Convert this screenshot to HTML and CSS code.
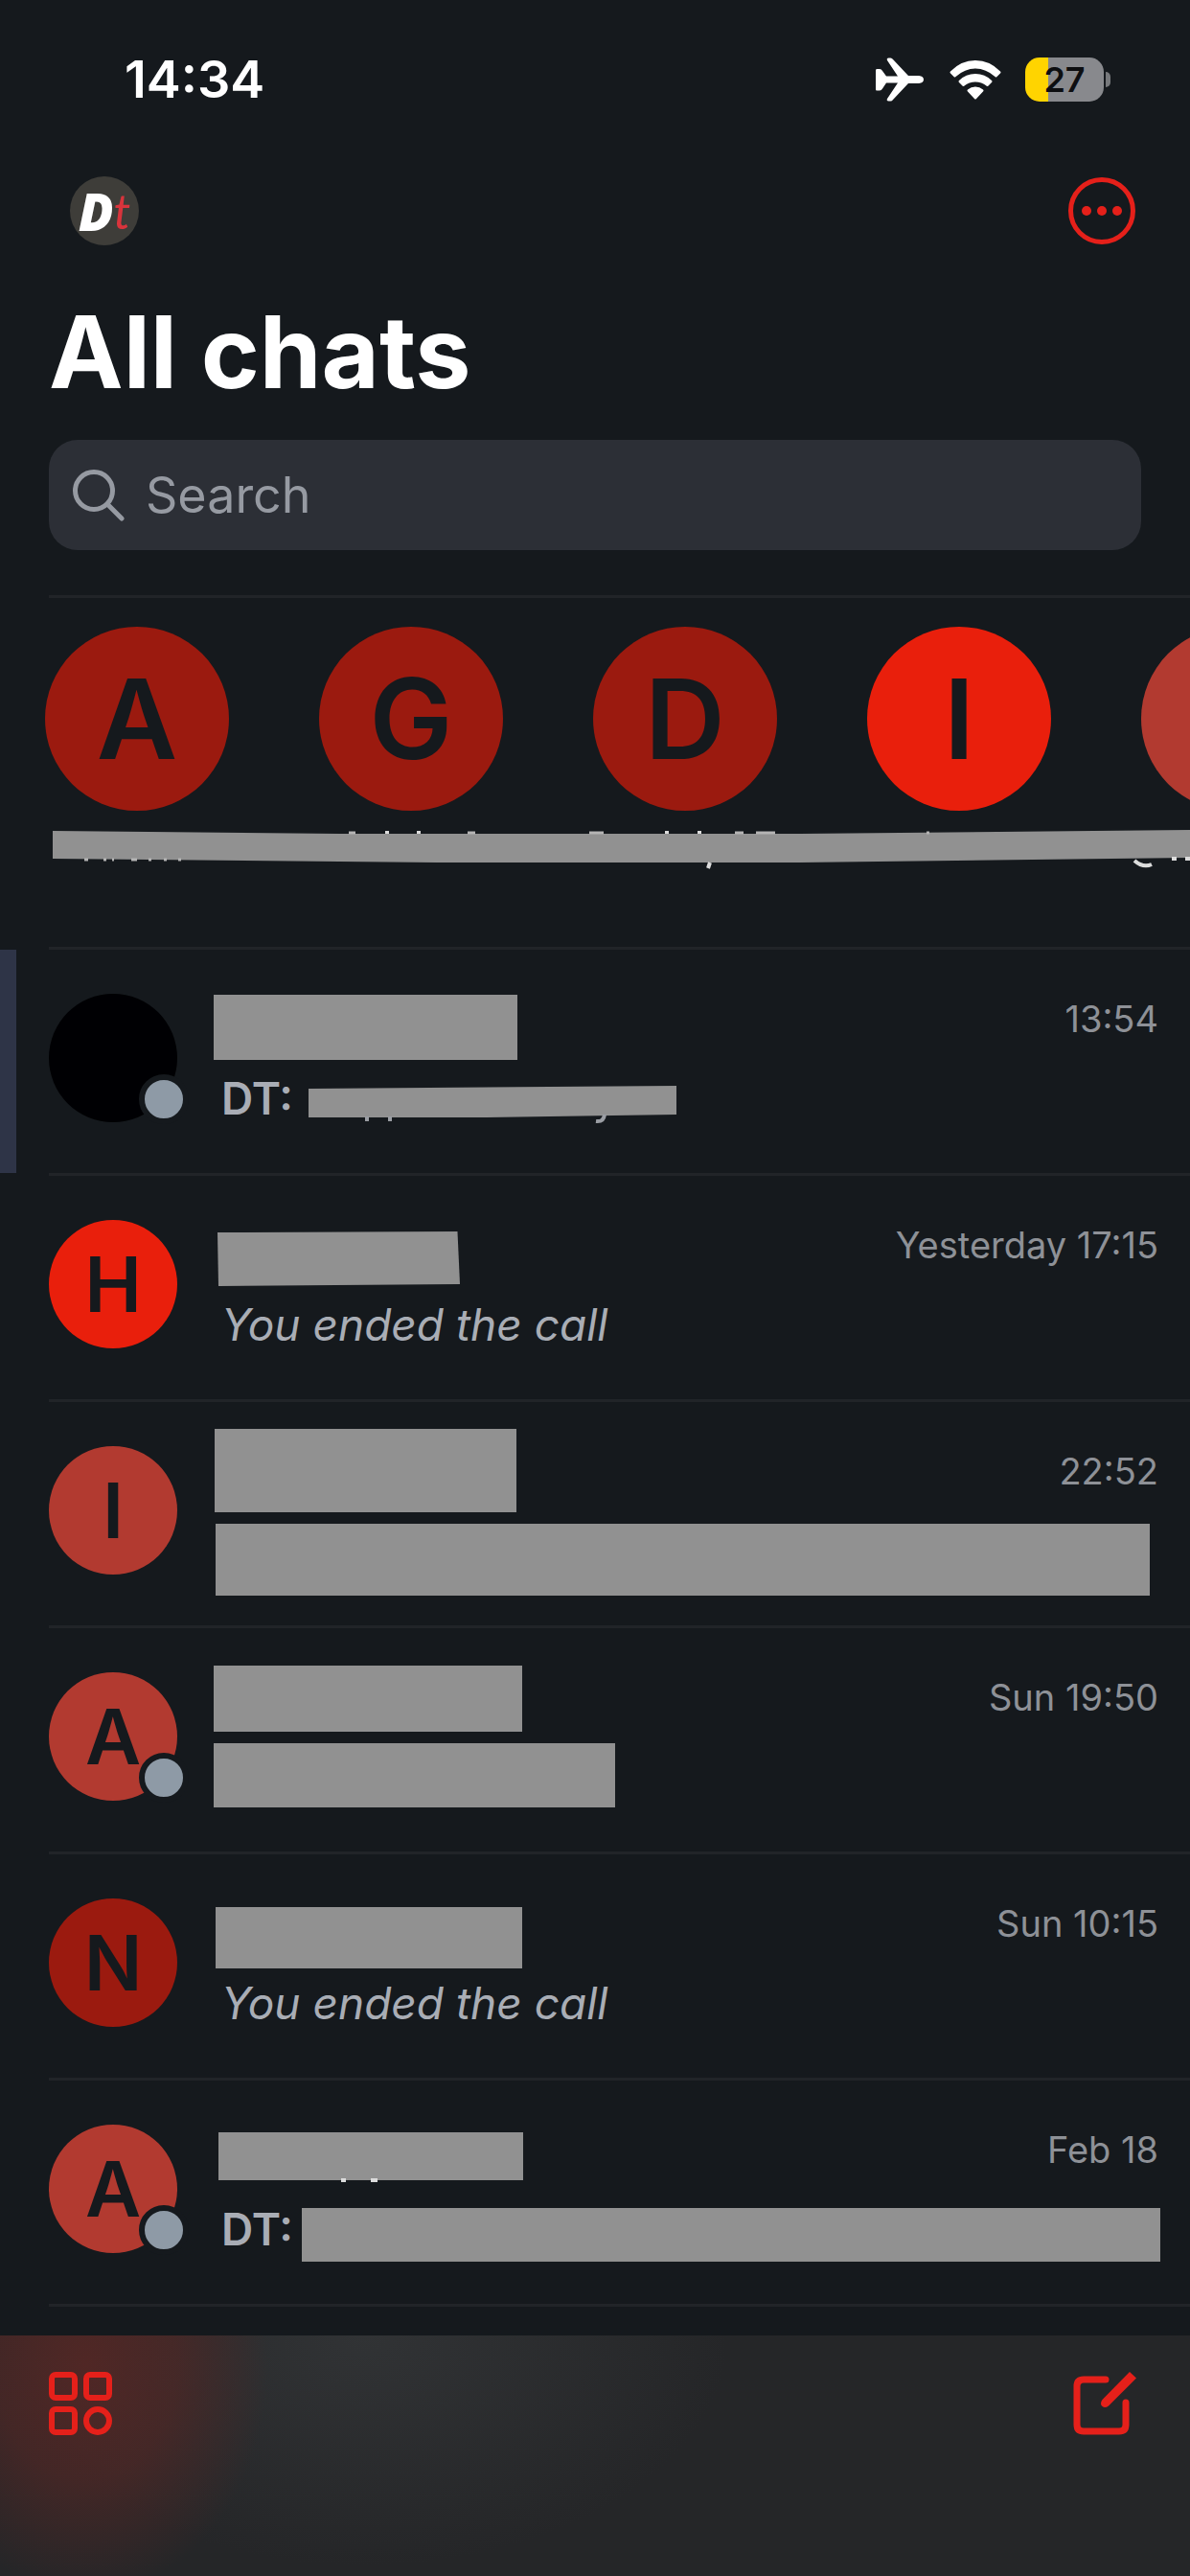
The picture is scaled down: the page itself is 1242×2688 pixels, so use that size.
FILE: index.html
```html
<!DOCTYPE html>
<html lang="en">
<head>
<meta charset="utf-8">
<meta name="viewport" content="width=device-width, initial-scale=1">
<title>All chats</title>
<link rel="stylesheet" href="styles.css">
</head>
<body>
<div class="app">
  <div class="status">
    <time class="status-time">14:34</time>
    <div class="status-icons">
      <svg class="plane" viewBox="0 0 50 46" aria-hidden="true"><path d="M1 12h3q2 0 3 2l4 5.500h12L12 3q-1-2.500 1.500-2.500h2q1.500 0 2.500 1.500l16 17h11q5 .5 5 4t-5 4h-11L18 44q-1 1.500-2.500 1.500h-2Q11 45.500 12 43l11-16.500H11l-4 6q-1 2-3 2H1q-1 0-1-1.500V13.500Q0 12 1 12z"/></svg>
      <svg class="wifi" viewBox="0 0 54 43" aria-hidden="true"><path d="M1 12.500Q12 1 27 1t26 11.500q1 1 0 2l-3.500 3.500q-1 1-2 0Q38 9.500 27 9.500T6.500 18q-1 1-2 0L1 14.500q-1-1 0-2z"/><path d="M10 22q7-7 17-7t17 7q1 1 0 2l-3.500 3.500q-1 1-2 0-5-4-11.500-4t-11.500 4q-1 1-2 0L10 24q-1-1 0-2z"/><path d="M19 31.500q3.500-3 8-3t8 3q1 1 0 2l-7 7.500q-1 1-2 0l-7-7.500q-1-1 0-2z"/></svg>
      <div class="battery"><span class="battery-level">27</span></div>
    </div>
  </div>

  <header class="top">
    <div class="toolbar">
      <button class="profile" aria-label="Profile"><span class="profile-d">D</span><span class="profile-t">t</span></button>
      <button class="icon-button" aria-label="More options">
        <svg class="more" viewBox="0 0 72 72" aria-hidden="true"><circle cx="36" cy="36" r="32.500" fill="none" stroke="currentColor" stroke-width="5"/><circle cx="20" cy="36" r="5"/><circle cx="36" cy="36" r="5"/><circle cx="52" cy="36" r="5"/></svg>
      </button>
    </div>
    <h1 class="title">All chats</h1>
    <label class="search">
      <svg class="search-icon" viewBox="0 0 54 54" aria-hidden="true"><circle cx="22" cy="22" r="19.500"/><path d="M36 36l15 15"/></svg>
      <input class="search-input" type="search" placeholder="Search" aria-label="Search">
    </label>
  </header>

  <section class="recents" aria-label="Recent chats">
    <div class="recent-list">
      <div class="recent dark">A</div>
      <div class="recent dark">G</div>
      <div class="recent dark">D</div>
      <div class="recent bright">I</div>
      <div class="recent soft"></div>
    </div>
    <svg class="recent-mask" viewBox="0 0 1187 44" aria-hidden="true">
      <path class="mask" d="M0 3L300 6H780L1187 2V31L780 36H400L0 32z"/>
      <path class="scrap faint" d="M33 33h4m16 0h3m6 0h2m18 0h6m12 0h3m13 0h3m12 0h3M309 5h7m117 0h8M560 5h15m137 0h9m13 0h20M912 5h3"/>
      <path class="scrap" d="M349 3v3m33-3v3m259-3v3m34-3v3M686 36l-2 6M1129 34q9 8 18 4M1168 32h5m9 0h5"/>
    </svg>
  </section>

  <ul class="chats">
    <li class="chat selected">
      <div class="avatar black"><span class="presence"></span></div>
      <div class="body">
        <div class="name"><span class="mask-box name-1"></span></div>
        <div class="preview"><b class="sender">DT:</b>
          <svg class="preview-1" viewBox="0 0 384 42" aria-hidden="true"><path class="mask" d="M0 4L384 1V31L180 34H0z"/><path class="scrap dim" d="M61 33v5m24-5v5m224-7q-1 8-9 7"/></svg>
        </div>
      </div>
      <time class="when">13:54</time>
    </li>
    <li class="chat">
      <div class="avatar bright">H</div>
      <div class="body">
        <div class="name"><span class="mask-box name-2"></span></div>
        <div class="preview"><i>You ended the call</i></div>
      </div>
      <time class="when">Yesterday 17:15</time>
    </li>
    <li class="chat">
      <div class="avatar soft">I</div>
      <div class="body">
        <div class="name"><span class="mask-box name-3"></span></div>
        <div class="preview"><span class="mask-box preview-3"></span></div>
      </div>
      <time class="when">22:52</time>
    </li>
    <li class="chat">
      <div class="avatar soft">A<span class="presence"></span></div>
      <div class="body">
        <div class="name"><span class="mask-box name-4"></span></div>
        <div class="preview"><span class="mask-box preview-4"></span></div>
      </div>
      <time class="when">Sun 19:50</time>
    </li>
    <li class="chat">
      <div class="avatar dark">N</div>
      <div class="body">
        <div class="name"><span class="mask-box name-5"></span></div>
        <div class="preview"><i>You ended the call</i></div>
      </div>
      <time class="when">Sun 10:15</time>
    </li>
    <li class="chat">
      <div class="avatar soft">A<span class="presence"></span></div>
      <div class="body">
        <div class="name">
          <svg class="name-6" viewBox="0 0 318 54" aria-hidden="true"><path class="mask" d="M0 0H318V50H0z"/><path class="scrap" d="M128 50h5m26 0h7"/></svg>
        </div>
        <div class="preview"><b class="sender">DT:</b><span class="mask-box preview-6"></span></div>
      </div>
      <time class="when">Feb 18</time>
    </li>
  </ul>

  <nav class="tabs" aria-label="Actions">
    <button class="icon-button" aria-label="Spaces">
      <svg class="tab-icon" viewBox="0 0 66 66" aria-hidden="true"><g fill="none" stroke="currentColor" stroke-width="6"><rect x="3" y="3" width="24" height="24" rx="4"/><rect x="39" y="3" width="24" height="24" rx="4"/><rect x="3" y="39" width="24" height="24" rx="4"/><circle cx="51" cy="51" r="12"/></g></svg>
    </button>
    <button class="icon-button" aria-label="New chat">
      <svg class="tab-icon" viewBox="0 0 66 66" aria-hidden="true"><g fill="none" stroke="currentColor"><path d="M34 8H11Q4 8 4 15V55Q4 62 11 62H48Q55 62 55 55V32" stroke-width="7" stroke-linecap="round"/></g><path d="M59 0l7 6.500-29 29q-2 1.500-4 1.500-4-1-4-4 0-2 1.500-4z"/></svg>
    </button>
  </nav>
</div>
</body>
</html>
```
FILE: styles.css
```css
:root {
  --bg: #15191d;
  --accent: #e5201a;
  --mask: #919191;
  --line: #212428;
  --muted: #8e9197;
  --text: #a9adb5;
}

* { box-sizing: border-box; }

body {
  margin: 0;
  background: var(--bg);
  color: #fff;
  font-family: Inter, "Liberation Sans", sans-serif;
}

button {
  padding: 0;
  border: 0;
  background: none;
  font: inherit;
}

svg { display: block; fill: currentColor; }

.app {
  display: flex;
  flex-direction: column;
  min-height: 100vh;
  overflow: hidden;
}

/* Status bar */
.status {
  display: flex;
  align-items: center;
  justify-content: space-between;
  height: 113px;
  padding: 53px 83px 0 130px;
}
.status-time { font-size: 54px; font-weight: 600; line-height: 60px; }
.status-icons { display: flex; align-items: center; }
.plane { width: 50px; height: 46px; }
.wifi { width: 54px; height: 43px; margin: 0 25px 0 27px; }
.battery { display: flex; align-items: center; gap: 2px; }
.battery::after {
  content: "";
  width: 5px;
  height: 16px;
  border-radius: 0 8px 8px 0;
  background: #77797c;
}
.battery-level {
  width: 82px;
  border-radius: 15px;
  background: linear-gradient(90deg, #ffd400 24px, #88898d 24px);
  color: #0d0e10;
  font-size: 36px;
  font-weight: 600;
  line-height: 46px;
  text-align: center;
}

/* Header */
.top { padding: 71px 51px 47px; }
.toolbar {
  display: flex;
  justify-content: space-between;
  padding: 0 5px 0 22px;
}
.profile {
  display: flex;
  align-items: center;
  justify-content: center;
  width: 72px;
  height: 72px;
  border-radius: 50%;
  background: #3e3d39;
  line-height: 72px;
}
.profile-d {
  color: #fff;
  font-family: "Open Sans", sans-serif;
  font-size: 54px;
  font-style: italic;
  font-weight: 800;
}
.profile-t {
  color: #d8343c;
  font-family: Lato, sans-serif;
  font-size: 50px;
  font-style: italic;
  font-weight: 400;
}
.icon-button { color: var(--accent); }
.more { width: 72px; height: 72px; }
.title {
  margin: 51px 0 32px;
  font-size: 104px;
  font-weight: 700;
  line-height: 120px;
}
.search {
  display: flex;
  align-items: center;
  gap: 22px;
  height: 115px;
  padding: 0 25px;
  border-radius: 30px;
  background: #2c2f36;
  color: #969aa2;
}
.search-icon {
  width: 54px;
  height: 54px;
  fill: none;
  stroke: currentColor;
  stroke-width: 5;
  stroke-linecap: round;
}
.search-input {
  flex: 1;
  min-width: 0;
  padding: 0;
  border: 0;
  outline: 0;
  background: none;
  color: inherit;
  font: inherit;
  font-size: 52px;
}
.search-input::placeholder { color: inherit; opacity: 1; }

/* Avatar colours */
.dark { background: #9b1a0f; }
.bright { background: #e91f0c; }
.soft { background: #b23a30; }
.black { background: #000003; }

/* Redactions */
.mask { fill: var(--mask); }
.mask-box { display: block; background: var(--mask); }
.scrap { fill: none; stroke: #dcdcdc; stroke-width: 4; }
.scrap.faint { stroke: #b4b4b4; stroke-width: 3; }
.scrap.dim { stroke: #9a9da3; }

/* Recent chats */
.recents {
  height: 367px;
  margin-left: 51px;
  border-top: 3px solid var(--line);
}
.recent-list {
  display: flex;
  gap: 94px;
  margin: 30px 0 18px -4px;
  overflow: hidden;
}
.recent {
  flex: none;
  width: 192px;
  height: 192px;
  border-radius: 50%;
  color: #15191d;
  font-size: 116px;
  font-weight: 600;
  line-height: 192px;
  text-align: center;
}
.recent-mask { width: calc(100% - 4px); margin-left: 4px; }

/* Chat list */
.chats {
  margin: 0 0 30px;
  padding: 0 0 0 51px;
  list-style: none;
}
.chats::after {
  content: "";
  display: block;
  height: 3px;
  background: var(--line);
}
.chat {
  position: relative;
  display: flex;
  height: 236px;
  padding-right: 34px;
  border-top: 3px solid var(--line);
}
.selected::before {
  content: "";
  position: absolute;
  left: -51px;
  width: 17px;
  height: 233px;
  background: #2e3447;
}
.avatar {
  position: relative;
  flex: none;
  width: 134px;
  height: 134px;
  margin: 46px 38px 0 0;
  border-radius: 50%;
  color: #15191d;
  font-size: 80px;
  font-weight: 600;
  line-height: 134px;
  text-align: center;
}
.presence {
  position: absolute;
  right: -12px;
  bottom: -2px;
  width: 52px;
  height: 52px;
  border: 6px solid var(--bg);
  border-radius: 50%;
  background: #8e9aa6;
}
.body { flex: 1; min-width: 0; }
.name { display: flex; align-items: flex-end; height: 115px; }
.preview {
  display: flex;
  align-items: flex-start;
  padding-left: 8px;
  color: var(--text);
  font-size: 46px;
  line-height: 80px;
  white-space: nowrap;
}
.sender { font-weight: 600; }
.when {
  position: absolute;
  top: 46px;
  right: 33px;
  color: var(--muted);
  font-size: 38px;
  line-height: 52px;
}

.name-1 { width: 317px; height: 68px; }
.name-2 { width: 253px; height: 57px; margin-left: 4px; clip-path: polygon(0 1px, 99% 0, 100% 55px, 1px 100%); }
.name-3 { width: 315px; height: 87px; margin-left: 1px; }
.name-4 { width: 322px; height: 69px; margin-bottom: 7px; }
.name-5 { width: 320px; height: 64px; margin: 0 0 -4px 2px; }
.name-6 { width: 318px; height: 54px; margin: 0 0 7px 5px; }
.preview-1 { width: 384px; height: 42px; margin: 26px 0 0 16px; }
.preview-3 { flex: 1; height: 75px; margin: 12px 8px 0 -6px; }
.preview-4 { width: 419px; height: 67px; margin: 5px 0 0 -8px; }
.preview-6 { flex: 1; height: 56px; margin: 18px -3px 0 9px; }

/* Bottom bar */
.tabs {
  display: flex;
  align-items: flex-start;
  justify-content: space-between;
  height: 251px;
  margin-top: auto;
  padding: 38px 56px 0 51px;
  background:
    radial-gradient(ellipse 190px 240px at 90px 30px, #502725 0, #502725b3 50%, #50272500 100%),
    radial-gradient(ellipse 380px 240px at 380px 0, #313335 0, #31333500 100%),
    #252628;
}
.tab-icon { width: 66px; height: 66px; }
```
